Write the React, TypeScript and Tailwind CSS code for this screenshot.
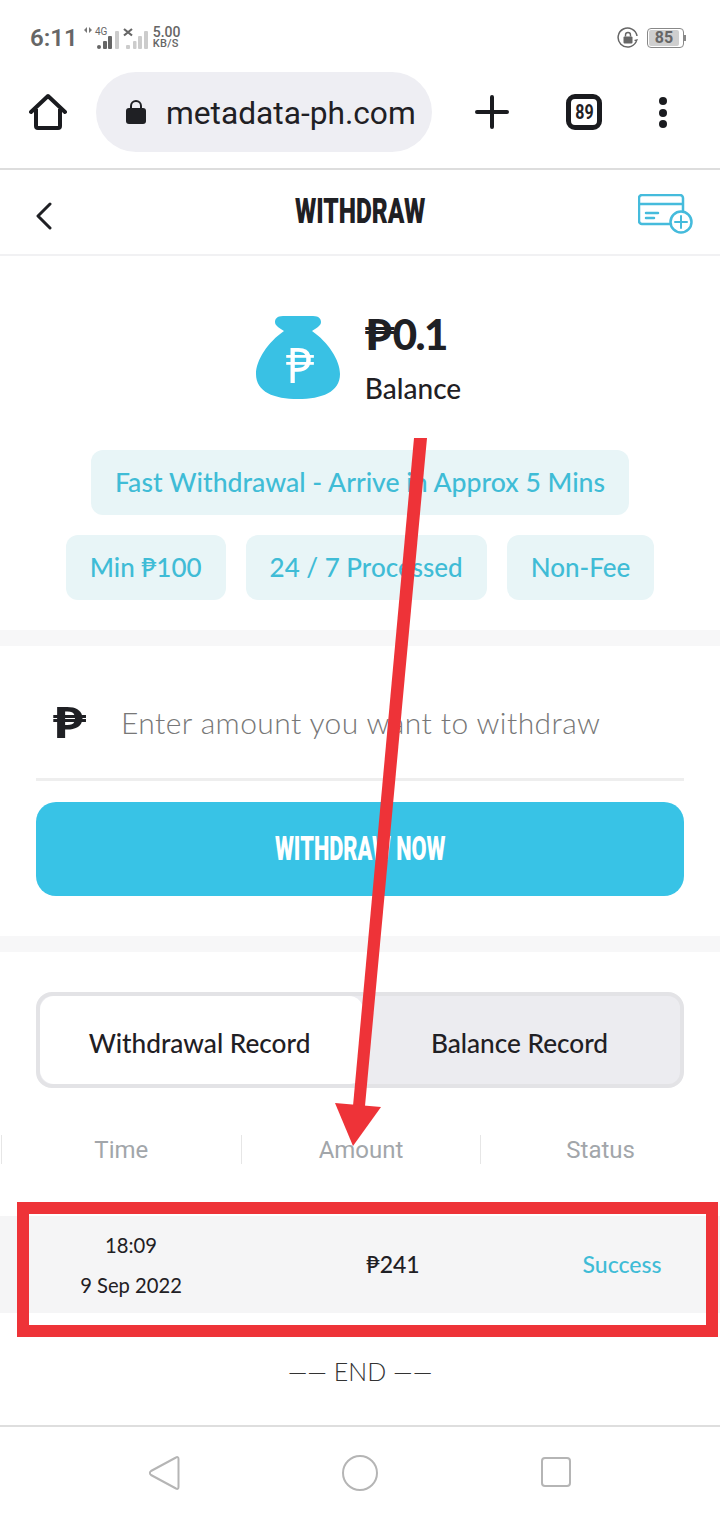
const StatusBar = () => (
  <div className="h-[72px] flex items-start justify-between pl-[30px] pr-[34px] pt-[24px] text-[#666666]">
    <div className="flex items-center gap-[6px]">
      <span className="text-[24px] leading-[28px] font-semibold font-['Roboto',sans-serif]">6:11</span>
      <svg width="66" height="24" viewBox="0 0 66 24" className="-mt-[2px]">
        <path d="M3 2v6L0 5zM5 2v6l3-3z" fill="#777777" />
        <text x="11" y="10" fontSize="10" fill="#666666" fontFamily="Roboto">4G</text>
        <rect x="13" y="20" width="4" height="4" rx="2" fill="#666666" />
        <rect x="19" y="16" width="4" height="8" rx="1" fill="#666666" />
        <rect x="24" y="11" width="4" height="13" rx="1" fill="#666666" />
        <rect x="31" y="6" width="4" height="18" rx="1" fill="#cccccc" />
        <path d="M40 4l8 6.5M48 4l-8 6.5" stroke="#666666" strokeWidth="2.2" />
        <rect x="42" y="20" width="4" height="4" rx="1" fill="#cccccc" />
        <rect x="49" y="16" width="3.5" height="8" rx="1" fill="#cccccc" />
        <rect x="54" y="11" width="4" height="13" rx="1" fill="#cccccc" />
        <rect x="60" y="6" width="4" height="18" rx="1" fill="#cccccc" />
      </svg>
      <div className="-ml-[3px] -mt-[1px] text-[13px] leading-[12px] font-medium font-['Roboto',sans-serif]">
        <div className="text-[14px]">5.00</div>
        <div className="text-[11px] tracking-[0.3px]">KB/S</div>
      </div>
    </div>
    <div className="flex items-center gap-[8px] h-[28px]">
      <svg width="22" height="22" viewBox="0 0 22 22" fill="none">
        <path d="M19 15A9.5 9.5 0 1 1 20 9" stroke="#666666" strokeWidth="1.5" />
        <path d="M17 13l2.5 2.5L21 12" fill="#666666" />
        <rect x="6.5" y="9.5" width="9" height="7" rx="1" fill="#666666" />
        <path d="M8.5 9.5V8a2.5 2.5 0 0 1 5 0v1.5" stroke="#666666" strokeWidth="1.4" />
      </svg>
      <div className="flex items-center">
        <div className="w-[37px] h-[20px] rounded-[4px] border border-[#888888] p-[1px]">
          <div className="w-[30px] h-full bg-[#cfcfcf] rounded-[2px] flex items-center justify-center text-[16px] font-bold text-[#666666] font-['Roboto',sans-serif]">
            85
          </div>
        </div>
        <div className="w-[2px] h-[6px] bg-[#888888]" />
      </div>
    </div>
  </div>
);

const BrowserBar = () => (
  <div className="h-[98px] flex items-start border-b-2 border-[#dddddd] font-['Roboto',sans-serif] text-[#1f2024]">
    <svg width="38" height="38" viewBox="0 0 38 38" fill="none" className="ml-[29px] mt-[21px] shrink-0">
      <path d="M2 19L19 3l17 16" stroke="#1a1b1f" strokeWidth="4" strokeLinecap="round" strokeLinejoin="round" />
      <path d="M7 16v17a2 2 0 0 0 2 2h20a2 2 0 0 0 2-2V16" stroke="#1a1b1f" strokeWidth="4" strokeLinejoin="round" />
    </svg>
    <div className="ml-[29px] w-[336px] h-[80px] rounded-[40px] bg-[#eeeef3] flex items-center pl-[30px] shrink-0">
      <svg width="20" height="26" viewBox="0 0 20 26" fill="none">
        <path d="M5 11V7a5 5 0 0 1 10 0v4" stroke="#1f2024" strokeWidth="2" />
        <rect y="9" width="20" height="16" rx="3" fill="#1f2024" />
      </svg>
      <span className="ml-[20px] mt-[3px] text-[31.7px] leading-none">metadata-ph.com</span>
    </div>
    <svg width="34" height="34" viewBox="0 0 34 34" className="ml-[43px] mt-[23px] shrink-0">
      <path d="M17 2v30M2 17h30" stroke="#1a1b1f" strokeWidth="4" strokeLinecap="round" />
    </svg>
    <div className="ml-[57px] mt-[22px] w-[36px] h-[36px] rounded-[9px] border-[5px] border-[#1a1b1f] flex items-center justify-center shrink-0">
      <span className="text-[20px] font-bold inline-block scale-x-[0.8]">89</span>
    </div>
    <div className="ml-[57px] mt-[25px] flex flex-col gap-[3.5px] shrink-0">
      <div className="w-[8px] h-[8px] rounded-full bg-[#1a1b1f]" />
      <div className="w-[8px] h-[8px] rounded-full bg-[#1a1b1f]" />
      <div className="w-[8px] h-[8px] rounded-full bg-[#1a1b1f]" />
    </div>
  </div>
);

const PageHeader = () => (
  <div className="h-[86px] border-b-2 border-[#f1f1f3] grid grid-cols-3 items-center pl-[35px] pr-[26px]">
    <svg width="18" height="28" viewBox="0 0 18 28" fill="none" className="mt-[8px]">
      <path d="M15 2L3 14l12 12" stroke="#1f2024" strokeWidth="3" strokeLinecap="round" strokeLinejoin="round" />
    </svg>
    <div className="text-center -mt-[2px] pr-[9px]">
      <span className="text-[35px] leading-none font-black text-[#1f2024] inline-block scale-x-[0.7] font-['Roboto',sans-serif]">
        WITHDRAW
      </span>
    </div>
    <svg width="56" height="42" viewBox="0 0 56 42" fill="none" className="justify-self-end mt-[5px]">
      <path d="M42 30H4a3 3 0 0 1-3-3V4a3 3 0 0 1 3-3h38a3 3 0 0 1 3 3v15" stroke="#45bbdc" strokeWidth="2.5" />
      <path d="M1 10h44" stroke="#45bbdc" strokeWidth="2.5" />
      <path d="M8 19h12M8 24h8" stroke="#45bbdc" strokeWidth="2.5" strokeLinecap="round" />
      <circle cx="43" cy="28" r="10.5" fill="#ffffff" stroke="#45bbdc" strokeWidth="2.5" />
      <path d="M43 22v12M37 28h12" stroke="#45bbdc" strokeWidth="2" strokeLinecap="round" />
    </svg>
  </div>
);

const Chip = ({ label, wide }: { label: string; wide?: boolean }) => (
  <div
    className={
      wide
        ? "h-[65px] rounded-[12px] bg-[#e8f5f7] px-[24px] flex items-center text-[26.6px] font-medium text-[#3fbcd6] whitespace-nowrap"
        : "h-[65px] rounded-[12px] bg-[#e8f5f7] px-[24px] flex items-center text-[26px] font-medium text-[#3fbcd6] whitespace-nowrap"
    }
  >
    {label}
  </div>
);

const BalanceBlock = () => (
  <div className="h-[374px] flex flex-col items-center">
    <div className="mt-[58px] h-[92px] flex items-start pr-[3px]">
      <svg width="84" height="83" viewBox="0 0 84 83" className="shrink-0 mr-[25px] mt-[2px]">
        <path
          d="M27 0H57C63 0 65 3 65 6C65 10 60 12 56 15C72 26 84 44 84 58C84 76 66 83 42 83C18 83 0 76 0 58C0 44 12 26 28 15C24 12 19 10 19 6C19 3 21 0 27 0Z"
          fill="#39c1e4"
        />
        <text x="44" y="67" fontSize="50" fontWeight="400" fill="#ffffff" textAnchor="middle" fontFamily="Noto Sans">
          ₱
        </text>
      </svg>
      <div className="flex flex-col">
        <span className="text-[42px] leading-[40px] font-black text-[#1f2024] tracking-[-1.5px] whitespace-nowrap">
          <span className="inline-block scale-x-[1.2] origin-left mr-[5px]">₱</span>0.1
        </span>
        <span className="mt-[19px] text-[28px] leading-[30px] font-medium text-[#1f2024]">Balance</span>
      </div>
    </div>
    <div className="mt-[44px]">
      <Chip label="Fast Withdrawal - Arrive in Approx 5 Mins" wide />
    </div>
    <div className="mt-[20px] flex gap-[20px]">
      <Chip label="Min ₱100" />
      <Chip label="24 / 7 Processed" />
      <Chip label="Non-Fee" />
    </div>
  </div>
);

const WithdrawForm = () => (
  <div className="h-[322px] px-[36px] pt-[46px] border-t-[16px] border-b-[16px] border-[#f7f7f8]">
    <div className="h-[89px] border-b-[3px] border-[#eeeeee] flex items-center pb-[26px]">
      <span className="w-[85px] pl-[17px] text-[42px] font-black text-[#1f2024] leading-none">
        <span className="inline-block scale-x-[1.35] origin-left -mt-[4px]">₱</span>
      </span>
      <input
        placeholder="Enter amount you want to withdraw"
        className="flex-1 outline-none text-[30px] font-light tracking-[0.42px] text-[#777777] placeholder:text-[#777777]"
      />
    </div>
    <button className="mt-[21px] w-full h-[94px] rounded-[20px] bg-[#38c3e6] text-white">
      <span className="text-[33px] font-black inline-block scale-x-[0.66] font-['Roboto',sans-serif]">WITHDRAW NOW</span>
    </button>
  </div>
);

const Tabs = () => (
  <div className="mx-[36px] mt-[40px] h-[96px] rounded-[16px] border-[4px] border-[#e3e3e6] bg-[#ececf0] flex text-[26.2px] font-medium text-[#1f2024]">
    <div className="w-[323px] rounded-[14px] bg-white flex items-center justify-center pr-[4px] pt-[7px]">Withdrawal Record</div>
    <div className="flex-1 flex items-center justify-center pr-[4px] pt-[7px]">Balance Record</div>
  </div>
);

const RecordTable = () => (
  <div>
    <div className="mt-[47px] pl-[1px] grid grid-cols-3 text-[24px] text-[#a2a6aa] font-['Roboto',sans-serif]">
      <div className="h-[29px] border-l border-[#e6e6e6] flex items-center justify-center">Time</div>
      <div className="h-[29px] border-l border-[#e6e6e6] flex items-center justify-center">Amount</div>
      <div className="h-[29px] flex items-center justify-center border-l border-[#e6e6e6]">Status</div>
    </div>
    <div className="mt-[52px] h-[97px] bg-[#f5f5f6] flex items-center text-center text-[20.2px] text-[#1f2024]">
      <div className="w-[262px] leading-[40px]">
        <div>18:09</div>
        <div>9 Sep 2022</div>
      </div>
      <div className="w-[262px] text-[23px] font-medium">₱241</div>
      <div className="w-[196px] text-[23px] font-medium text-[#3fbcd6]">Success</div>
    </div>
    <div className="mt-[38px] text-center text-[25px] leading-[40px] font-light text-[#333333]">—— END ——</div>
  </div>
);

const NavBar = () => (
  <div className="mt-auto h-[95px] border-t-2 border-[#dedede] flex items-start pt-[28px] pl-[148px] text-[#b5b5b5]">
    <svg width="32" height="36" viewBox="0 0 32 36" fill="none">
      <path
        d="M28 2.5c1.5-1 2.5-.2 2.5 1.5v28c0 1.7-1 2.5-2.5 1.5L3 20c-1.5-1-1.5-3 0-4z"
        stroke="currentColor"
        strokeWidth="2"
        strokeLinejoin="round"
      />
    </svg>
    <div className="ml-[162px] w-[36px] h-[36px] rounded-full border-2 border-[#b5b5b5]" />
    <div className="ml-[163px] mt-[2px] w-[30px] h-[30px] rounded-[4px] border-2 border-[#b5b5b5]" />
  </div>
);

export default function App() {
  return (
    <div className="relative w-[720px] h-[1520px] overflow-hidden bg-white flex flex-col font-['Lato','Noto_Sans',sans-serif]">
      <StatusBar />
      <BrowserBar />
      <PageHeader />
      <BalanceBlock />
      <WithdrawForm />
      <Tabs />
      <RecordTable />
      <NavBar />

      {/* red annotation drawn over the screenshot */}
      <svg width="720" height="1520" viewBox="0 0 720 1520" className="absolute inset-0 pointer-events-none">
        <path d="M414 438H427L365 1106H353Z" fill="#ee3338" />
        <path d="M335 1103L381 1107L353 1146Z" fill="#ee3338" />
      </svg>
      <div className="absolute left-[17px] top-[1202px] w-[701px] h-[135px] border-[12px] border-[#ee3338]" />
    </div>
  );
}
